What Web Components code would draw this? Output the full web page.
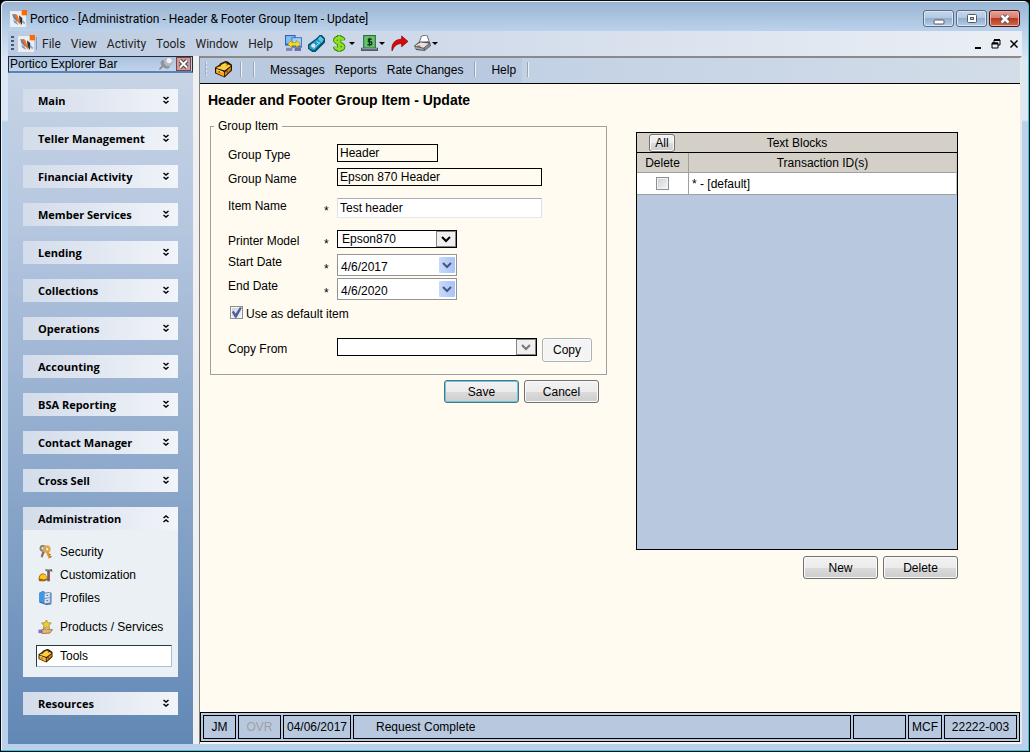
<!DOCTYPE html>
<html lang="en">
<head>
<meta charset="utf-8">
<title>Portico - [Administration - Header &amp; Footer Group Item - Update]</title>
<style>
  html, body { margin: 0; height: 100%; }
  body { font: 12px/16px "Liberation Sans", Arial, sans-serif; color: #000; background: #000; }
</style>
</head>
<body>
<portico-app></portico-app>
<script>
const define = (name, html, setup) => {
  const tpl = document.createElement('template');
  tpl.innerHTML = '<style>*{box-sizing:border-box}</style>' + html;
  customElements.define(name, class extends HTMLElement {
    constructor() {
      super();
      this.attachShadow({ mode: 'open' }).append(tpl.content.cloneNode(true));
    }
    connectedCallback() { if (setup) setup(this, this.shadowRoot); }
  });
};

const ICONS = {
  logo: `<rect x="0" y="1" width="15" height="15" fill="#eceef2"/><path d="M2 4l4 0 1.500 4-1 3-3-3z" fill="#6c7f98"/><path d="M3 9l3 2 2 3-4-2z" fill="#6f9cc8"/><path d="M4 4l3 1 1.500 4 1.500 5-3-3-1.500-3z" fill="#f3701a"/><path d="M8.500 5l3 2.500v4.500l-.5 2-2-3.500z" fill="#2f333c"/><path d="M11.500 9l2.500 2.500v2l-2.500-1.500z" fill="#88a9cf"/><rect x="11" y="0" width="5" height="5" fill="#ff6a00"/>`,
  toolbox: `<path d="M0 6l4-2.500L5 2l5-2 2 .5 4 3V9l-7 6.500-9-4z" fill="#241400"/><path d="M1 6.500l4-2 5-2.500 5 2.500-6 4.500z" fill="#ffcf3c"/><path d="M1 7.500l7.500 3v4L1 11z" fill="#f8a81c"/><path d="M9.300 10.500L15 5.500v3L9.300 14z" fill="#d88410"/><path d="M4.500 5.500l1-2.500 5-2 1.500 1.500-1 2" fill="none" stroke="#5c3000" stroke-width=".8"/><path d="M1.500 8l6.500 2.500M6 4l4-1.800" stroke="#fff09c" stroke-width=".8"/><path d="M4 9.500v1.500M11.500 9.500v1.500" stroke="#3a2000" stroke-width=".8"/>`,
  monitors: `<rect x="0" y="0" width="10" height="10" fill="#2f62b8"/><rect x="1" y="1" width="8" height="7" fill="#7fbcf8"/><rect x="6" y="2" width="10" height="10" fill="#4a78c4"/><rect x="7" y="3" width="8" height="7" fill="#9cd0ff"/><path d="M2.500 8.500L6.500 5v2.200h4V5l4 3.500-4 3.500V9.800h-4V12z" fill="#ffdc14" stroke="#a07c00" stroke-width=".5"/><rect x="1" y="12" width="6" height="3" fill="#8286bc"/><rect x="9" y="12" width="6" height="3" fill="#6a6fa8"/>`,
  tag: `<path d="M0 9L8 3l3-3h2l3 3v4l-9 9H4l-4-3z" fill="#064e6c"/><path d="M1 10l7.500-6 4.500 3-7 7.500-4.500-1.500z" fill="#1f9fc6"/><path d="M9 4l2.500-3 3.500 3-2 3.500z" fill="#52c8e4"/><circle cx="5" cy="10" r="2" fill="#efdcf0"/><path d="M8 6l3 2M5 13l6-6" stroke="#a4ecff" stroke-width=".8"/>`,
  dollar: `<path d="M11.500 5c0-3-7.500-3-7.500 0s7.500 3 7.500 6-7.500 3-7.500 0M7.700 0v16" fill="none" stroke="#2c6e14" stroke-width="4"/><path d="M11.500 5c0-3-7.500-3-7.500 0s7.500 3 7.500 6-7.500 3-7.500 0M7.700 .5v15" fill="none" stroke="#8ee022" stroke-width="2.600"/>`,
  cash: `<rect x="2" y="0" width="12" height="13" fill="#1e7038"/><rect x="3" y="1" width="10" height="11" fill="#68bf6c"/><path d="M10 4H7v2.500h3V9H6M8 2.500v8" fill="none" stroke="#0d3d18" stroke-width="1.200"/><path d="M0 12h16v3H0z" fill="#4c5058"/><path d="M1 13h14" stroke="#a8adb4"/>`,
  redo: `<path d="M1 15C0 8 4 4 10 4V1l6 5-6 5V8C6 8 3 10 1 15z" fill="#d80808" stroke="#8a0000" stroke-width=".7"/>`,
  printer: `<path d="M5 7l2-6 5-1 2 5-3 3z" fill="#fff" stroke="#555" stroke-width=".8"/><path d="M0 10l5-4 10 0 1 4-6 5-8-1z" fill="#55575c"/><path d="M1 10l5-3 8 1-5 4z" fill="#e4e4e4"/><path d="M1 11l8 2v1l-7-1z" fill="#aaa"/><path d="M10 12l5-4v2l-5 4z" fill="#8d8d90"/><rect x="3" y="10" width="3" height="1" fill="#c0332b"/>`,
  keys: `<path d="M4.500 7L2.500 13l2 1.500L7.500 7z" fill="#77716a"/><circle cx="5" cy="3.800" r="2.700" fill="none" stroke="#8b8379" stroke-width="2.400"/><circle cx="9.500" cy="4.600" r="3" fill="none" stroke="#e0a848" stroke-width="2.800"/><path d="M8.500 8l3 7.500 3-1-3-7z" fill="#e0962e"/><path d="M12 11.500l2-.8M13 14l2-.8" stroke="#885010"/>`,
  custom: `<path d="M0 13c0-6 5-8 8-6l3 6-4 2H1z" fill="#a06000"/><path d="M1 12c0-5 5-6 7-4l2 4-4 1z" fill="#ffc422"/><path d="M8 1h7l1 3h-2l-1-1v12h-3V4L8 3z" fill="#5b5e66"/><path d="M11 6h1v8h-1z" fill="#d0402a"/><path d="M9 2h5" stroke="#c9ccd2"/>`,
  profile: `<path d="M1 2l4-2 2 1v12l7 1 1 1-6 1-8-3z" fill="#1d5fae"/><path d="M1 2l4-2 2 1v13l-6-2z" fill="#3f97e6"/><path d="M6 2l6-1 3 1v12l-7 1-2-1z" fill="#6c8db8"/><path d="M7 3l6-1v5l-6 1zM7 9l6-1v5l-6 1z" fill="#d4e4f6"/><path d="M9 5h2M9 11h2" stroke="#3f5f8c"/>`,
  product: `<path d="M9 0l1.600 3 4 .6-2.800 2.600.8 3.800L9 8 5.500 10l.8-3.800L3.500 3.600l4-.6z" fill="#f0cd32" stroke="#9a7a10" stroke-width=".8"/><path d="M0 11h4v4H0z" fill="#8866d0"/><path d="M4 11l5-1 2 1h5l-3 4-9 .5z" fill="#e6b474" stroke="#8d5a25" stroke-width=".8"/>`,
  pin: `<path d="M0 14l5-5" stroke="#777" stroke-width="1.500"/><ellipse cx="6.500" cy="8.500" rx="6" ry="4" transform="rotate(40 6.500 8.500)" fill="#8f949c"/><circle cx="10" cy="5.500" r="5" fill="#b4b8be"/><circle cx="11" cy="4" r="3" fill="#f1f2f4"/>`
};

define('app-icon', `<style>:host{display:block;flex:none;width:17px;height:17px}svg{display:block;width:100%;height:100%}</style><svg viewBox="0 0 16 16" aria-hidden="true"></svg>`,
  (el, root) => { root.querySelector('svg').innerHTML = ICONS[el.getAttribute('name')]; });

define('win-button', `<style>
  :host{display:block;width:75px;height:23px}
  button{display:block;width:100%;height:100%;padding:0;font:inherit;color:#000;border:1px solid #707070;border-radius:3px;
    background:linear-gradient(#f3f3f3,#ebebeb 50%,#dcdcdc 50%,#cdcdcd);box-shadow:inset 0 0 0 1px #fafafa}
  :host([primary]) button{border-color:#56707c;box-shadow:inset 0 0 0 1px #5fcbe6}
  :host([flat]) button{border-color:#adb2b5;background:#f4f4f4}
</style><button type="button"><slot></slot></button>`);

define('title-bar', `<style>
  :host{display:flex;align-items:center;height:29px;padding:4px 2px 0 2px;gap:3px;font:12px/16px Roboto,"Open Sans",sans-serif}
  h1{font:inherit;margin:0;flex:1;white-space:nowrap}
  .controls{display:flex;gap:2px;align-self:flex-start;padding-top:4px}
  button{width:31px;height:17px;padding:0;border:1px solid #5b6b86;border-radius:3px;display:grid;place-items:center;
    background:linear-gradient(#c4d5e9,#b2c8e1 50%,#93afcf 50%,#b5cee7);box-shadow:inset 0 0 0 1px #d8e5f3}
  .close{border-color:#43141a;background:linear-gradient(#e3a396,#d57f70 45%,#b83a20 50%,#cf6a4d);box-shadow:inset 0 0 0 1px #e9b1a4}
  svg{display:block;width:14px;height:12px}
</style>
<app-icon name="logo"></app-icon><h1>Portico - [Administration - Header &amp; Footer Group Item - Update]</h1>
<div class="controls">
<button aria-label="Minimize"><svg viewBox="0 0 14 12"><rect x="2" y="7" width="10" height="4" rx="1" fill="#fff" stroke="#555c69"/></svg></button>
<button aria-label="Maximize"><svg viewBox="0 0 14 12"><rect x="2.500" y="1.500" width="9" height="8" rx="1" fill="#fff" stroke="#555c69"/><rect x="5.500" y="4.500" width="3" height="2" fill="#b8cbe2" stroke="#555c69"/></svg></button>
<button class="close" aria-label="Close"><svg viewBox="0 0 14 12"><path d="M3.500 2.500l7 7M10.500 2.500l-7 7" stroke="#565060" stroke-width="4.500"/><path d="M3.500 2.500l7 7M10.500 2.500l-7 7" stroke="#fff" stroke-width="2.500"/></svg></button>
</div>`);

define('menu-bar', `<style>
  :host{display:flex;align-items:center;height:25px;padding:0 3px;background:linear-gradient(90deg,#bccbe1,#ebeff5);font:12px/16px Roboto,"Open Sans",sans-serif}
  .grip{width:3px;height:15px;background:repeating-linear-gradient(#3e5a84 0 2px,transparent 2px 4px);margin-right:4px}
  .rule{width:1px;height:13px;background:#7f9cc6;margin-left:1px}
  nav{display:flex;gap:10px;margin:0 12px 0 5px}
  a{color:#222;text-decoration:none}
  .tools{display:flex;align-items:center;gap:6px;flex:1}
  button{padding:0;border:0;background:none;display:flex;align-items:center;gap:1px}
  i{border:3px solid transparent;border-top-color:#000;border-bottom:0}
  .mdi{display:flex;gap:8px} .mdi svg{width:10px;height:12px;display:block}
</style>
<span class="grip"></span><app-icon name="logo"></app-icon><span class="rule"></span>
<nav><a href="#">File</a><a href="#">View</a><a href="#">Activity</a><a href="#">Tools</a><a href="#">Window</a><a href="#">Help</a></nav>
<div class="tools">
<button aria-label="Workstations"><app-icon name="monitors"></app-icon></button>
<button aria-label="Tags"><app-icon name="tag"></app-icon></button>
<button aria-label="Funds"><app-icon name="dollar"></app-icon><i></i></button>
<button aria-label="Cash"><app-icon name="cash"></app-icon><i></i></button>
<button aria-label="Forward"><app-icon name="redo"></app-icon></button>
<button aria-label="Print"><app-icon name="printer"></app-icon><i></i></button>
</div>
<div class="mdi">
<button aria-label="Minimize document"><svg viewBox="0 0 10 12"><path d="M2 10h6" stroke="#000" stroke-width="2"/></svg></button>
<button aria-label="Restore document"><svg viewBox="0 0 10 12"><path d="M3 5V2h6v5H7M1 5h6v5H1z" fill="none" stroke="#000"/><path d="M3 2h6M1 5.500h6" stroke="#000" stroke-width="2"/></svg></button>
<button aria-label="Close document"><svg viewBox="0 0 10 12"><path d="M1.500 2.500l7 7M8.500 2.500l-7 7" stroke="#000" stroke-width="1.500"/></svg></button>
</div>`);

define('nav-group', `<style>
  :host{display:block}
  button{display:flex;align-items:center;justify-content:space-between;width:100%;height:23px;padding:0 8px 0 15px;border:0;
    background:linear-gradient(90deg,#d3dcea,#f1f4f9);font:bold 11px/16px "Open Sans",sans-serif;color:#000;text-align:left}
  svg{display:block;width:8px;height:9px}
  :host([open]) svg{transform:scaleY(-1)}
  .items{display:none}
  :host([open]) .items{display:flex;flex-direction:column;gap:1px;padding:11px 6px 10px 13px;background:#eaf0f4}
</style>
<button type="button"><span></span><svg viewBox="0 0 8 9"><path d="M1.500 1L4 3l2.500-2M1.500 5L4 7l2.500-2" fill="none" stroke="#000" stroke-width="1.500"/></svg></button>
<div class="items"><slot></slot></div>`,
  (el, root) => {
    root.querySelector('span').textContent = el.getAttribute('label');
    root.querySelector('button').setAttribute('aria-expanded', el.hasAttribute('open'));
  });

define('nav-item', `<style>
  :host{display:block}
  :host([apart]){margin-top:6px}
  a{display:flex;align-items:center;gap:5px;height:22px;padding-left:1px;color:#000;text-decoration:none;border:1px solid transparent;white-space:nowrap}
  ::slotted(app-icon){margin-right:2px}
  :host([selected]) a{background:#fff;border-color:#243b44 #a9c0dc #a9c0dc #243b44}
</style><a href="#"><slot name="icon"></slot><slot></slot></a>`);

define('explorer-bar', `<style>
  :host{display:flex;flex-direction:column;flex:none;width:185px;background:linear-gradient(#c8d5e6,#b5c6df 25%,#6188b5)}
  header{display:flex;align-items:center;height:17px;padding:0 1px;border:1px solid #222e40;border-bottom:2px solid #5a83b5;background:linear-gradient(#a9c1df,#c3d4ea)}
  h2{flex:1;margin:0;font:inherit}
  header button{flex:none;padding:0;border:0;background:none;display:block}
  .x{width:15px;height:14px;margin-left:2px;background:#7d4048}
  .x svg{display:block;width:15px;height:14px}
  app-icon{width:15px;height:14px}
  nav{display:flex;flex-direction:column;gap:15px;padding:16px 15px 29px}
</style>
<header><h2>Portico Explorer Bar</h2><button aria-label="Pin"><app-icon name="pin"></app-icon></button><button class="x" aria-label="Close"><svg viewBox="0 0 15 14"><rect x="1" y="1" width="13" height="12" fill="#cf9a98"/><path d="M4 3.500l7 7M11 3.500l-7 7" stroke="#444" stroke-width="4"/><path d="M4 3.500l7 7M11 3.500l-7 7" stroke="#fff" stroke-width="2"/></svg></button></header>
<nav>
<nav-group label="Main"></nav-group><nav-group label="Teller Management"></nav-group><nav-group label="Financial Activity"></nav-group>
<nav-group label="Member Services"></nav-group><nav-group label="Lending"></nav-group><nav-group label="Collections"></nav-group>
<nav-group label="Operations"></nav-group><nav-group label="Accounting"></nav-group><nav-group label="BSA Reporting"></nav-group>
<nav-group label="Contact Manager"></nav-group><nav-group label="Cross Sell"></nav-group>
<nav-group label="Administration" open>
<nav-item><app-icon slot="icon" name="keys"></app-icon>Security</nav-item>
<nav-item><app-icon slot="icon" name="custom"></app-icon>Customization</nav-item>
<nav-item><app-icon slot="icon" name="profile"></app-icon>Profiles</nav-item>
<nav-item apart><app-icon slot="icon" name="product"></app-icon>Products / Services</nav-item>
<nav-item apart selected><app-icon slot="icon" name="toolbox"></app-icon>Tools</nav-item>
</nav-group>
<nav-group label="Resources"></nav-group>
</nav>`);

define('tool-strip', `<style>
  :host{display:flex;align-items:center;height:26px;padding:0 0 2px 5px;border-bottom:1px solid #000;background:linear-gradient(90deg,#b9c9df 0 322px,#c3d1e5 322px,#d2dde8)}
  .grip{width:2px;height:15px;margin-right:8px;background:repeating-linear-gradient(#e6ecf4 0 2px,transparent 2px 4px);border-left:1px solid #9fb0c8}
  .sep{width:2px;height:15px;border-left:1px solid #9aa4b2;border-right:1px solid #eef2f7}
  button{padding:0;border:0;background:none;margin-right:8px}
  nav{display:flex;gap:10px;margin:0 11px 0 15px}
  a{color:#000;text-decoration:none}
  .first{margin-right:11px}
</style>
<span class="grip"></span><button aria-label="Tools"><app-icon name="toolbox"></app-icon></button><span class="sep first"></span><span class="sep"></span>
<nav><a href="#">Messages</a><a href="#">Reports</a><a href="#">Rate Changes</a></nav><span class="sep"></span>
<nav><a href="#">Help</a></nav><span class="sep"></span>`);

define('form-row', `<style>
  :host{display:grid;grid-template-columns:92px 17px 1fr}
  .label{padding-top:3px;height:16px}
  :host([tall]) .label{padding:0}
  .mark{padding-left:4px;align-self:end;line-height:8px}
  :host([tall]) .mark{padding-bottom:3px}
  .field{display:flex;gap:5px}
</style><span class="label"><slot name="label"></slot></span><span class="mark"><slot name="mark"></slot></span><span class="field"><slot></slot></span>`);

define('combo-box', `<style>
  :host{display:grid;grid-template-columns:1fr 20px;width:120px;height:18px;border:1px solid #000;background:#fff}
  ::slotted(select),::slotted(input){grid-area:1/1/2/3;width:100%;appearance:none;border:0;background:none;padding:0 20px 0 4px;margin:0;font:inherit;color:#000;outline:0;border-radius:0;min-width:0;box-sizing:border-box}
  .arrow{grid-area:1/2;display:grid;place-items:center;border:1px solid #848484;background:#f0f0f0;pointer-events:none;color:#000}
  svg{width:10px;height:7px;display:block}
  :host([muted]) .arrow{color:#777}
  :host([date]){height:22px;border-color:#949494}
  :host([date]) .arrow{border:0;margin:2px 1px 2px 3px;border-radius:1px;background:linear-gradient(90deg,#c9d9fb,#a9c3f6);color:#46577c}
  ::slotted(input){padding:4px 20px 0 3px}
</style><slot></slot><span class="arrow"><svg viewBox="0 0 10 7"><path d="M1 1l4 4 4-4" fill="none" stroke="currentColor" stroke-width="2"/></svg></span>`);

const CHECKBOX = `
  input[type=checkbox]{appearance:none;flex:none;width:13px;height:13px;margin:0;border:1px solid #8e8f8f;background:linear-gradient(135deg,#cbcfd5,#f6f6f6);box-shadow:inset 0 0 0 1px #f4f4f4;display:block}
  input[type=checkbox]:checked::before{content:"";display:block;width:11px;height:11px;background:#4b5fa0;clip-path:polygon(8% 45%,25% 35%,42% 62%,80% 2%,100% 6%,50% 98%,36% 98%)}`;

define('group-item-form', `<style>
  :host{display:block}
  form{margin:0}
  fieldset{margin:0;padding:0;border:1px solid #a0a0a0;min-width:0}
  legend{margin-left:3px;padding:0 4px;line-height:14px}
  .rows{display:flex;flex-direction:column;padding:11px 14px 12px 17px;gap:6px}
  .spaced{margin-top:6px}
  input.text{width:205px;height:18px;padding:0 2px;border:1px solid #000;background:#fffbf0;font:inherit;color:#000;border-radius:0}
  input.short{width:101px}
  input.edit{height:20px;background:#fff;border-color:#abadb3 #dbdfe6 #e3e9ef #e2e3ea}
  .dates{display:flex;flex-direction:column;gap:2px}
  .check{display:flex;align-items:flex-start;gap:3px;height:16px;padding-left:2px}
  .copy{margin-top:10px}
  .wide{width:200px} .copy win-button{width:50px;height:24px}
  .actions{display:flex;justify-content:flex-end;gap:5px;padding:5px 8px 0}
  ${CHECKBOX}
</style>
<form>
<fieldset><legend>Group Item</legend><div class="rows">
<form-row><label slot="label" for="type">Group Type</label><input id="type" class="text short" value="Header" readonly></form-row>
<form-row><label slot="label" for="name">Group Name</label><input id="name" class="text" value="Epson 870 Header" readonly></form-row>
<form-row tall class="spaced"><label slot="label" for="item">Item Name</label><span slot="mark">*</span><input id="item" class="text edit" value="Test header"></form-row>
<form-row class="spaced"><label slot="label" for="model">Printer Model</label><span slot="mark">*</span><combo-box><select id="model"><option>Epson870</option></select></combo-box></form-row>
<div class="dates">
<form-row tall><label slot="label" for="start">Start Date</label><span slot="mark">*</span><combo-box date><input id="start" value="4/6/2017"></combo-box></form-row>
<form-row tall><label slot="label" for="end">End Date</label><span slot="mark">*</span><combo-box date><input id="end" value="4/6/2020"></combo-box></form-row>
</div>
<div class="check"><input id="default" type="checkbox" checked><label for="default">Use as default item</label></div>
<form-row class="copy"><label slot="label" for="from">Copy From</label><combo-box class="wide" muted><select id="from"><option></option></select></combo-box><win-button flat>Copy</win-button></form-row>
</div></fieldset>
<div class="actions"><win-button primary>Save</win-button><win-button>Cancel</win-button></div>
</form>`);

define('text-blocks', `<style>
  :host{display:flex;flex-direction:column}
  .grid{flex:1;border:1px solid #000;background:#b8c9df}
  .top{display:grid;grid-template-columns:51px 1fr 51px;align-items:center;height:20px;background:#d4d0c8;border-bottom:1px solid #000;text-align:center}
  .top win-button{width:26px;height:18px;margin-left:12px}
  h3{margin:0;font:inherit}
  table{width:100%;border-collapse:separate;border-spacing:0;table-layout:fixed}
  th,td{padding:0 3px;font-weight:normal;height:20px;border-bottom:1px solid #a0a0a0;border-right:1px solid #a0a0a0}
  tr>:last-child{border-right-color:#c4c4c4}
  th{background:#d4d0c8} td{background:#fff;height:22px}
  th:first-child{width:52px}
  td input{margin:0 auto!important}
  .actions{display:flex;justify-content:flex-end;gap:5px;padding-top:6px}
  ${CHECKBOX}
</style>
<div class="grid"><div class="top"><win-button>All</win-button><h3>Text Blocks</h3></div>
<table><thead><tr><th scope="col">Delete</th><th scope="col">Transaction ID(s)</th></tr></thead>
<tbody><tr><td><input type="checkbox" aria-label="Delete default transaction"></td><td>* - [default]</td></tr></tbody></table></div>
<div class="actions"><win-button>New</win-button><win-button>Delete</win-button></div>`);

define('status-bar', `<style>
  :host{display:grid;grid-template-columns:33px 43px 68px 1fr 53px 34px 73px;gap:2px;height:30px;padding:2px;border:1px solid #000;background:#b8c9df}
  span{display:flex;align-items:center;justify-content:center;border:1px solid #000;white-space:nowrap}
  .off{color:#a0a0a0}
  .message{justify-content:flex-start;padding-left:22px}
</style><span>JM</span><span class="off">OVR</span><span>04/06/2017</span><span class="message" role="status">Request Complete</span><span></span><span>MCF</span><span>22222-003</span>`);

define('portico-app', `<style>
  :host{display:flex;flex-direction:column;min-height:100vh;box-sizing:border-box;padding:1px 7px 7px;border:1px solid #0a0d10;border-radius:6px 6px 0 0;
    background:linear-gradient(#9ab3d1,#b9d1ea 29px,#dbe8f5 60px,#dbe8f5 119px,#b9d1ea 121px);box-shadow:inset -1px -1px #35c9e6,inset 1px 1px #e6f0fa}
  .body{flex:1;display:flex}
  .splitter{flex:none;width:7px;background:#f0f0f0;border-right:1px solid #808080}
  .work{flex:1;min-width:0;display:flex;flex-direction:column;background:#fffbf0;border-top:2px solid #8a8a8a;border-right:2px solid #e8e8e8;border-bottom:2px solid #f4f4f4}
  main{flex:1;display:flex;flex-direction:column;padding:8px 62px 133px 8px}
  h2{margin:0 0 11px;font:bold 14px/16px "Liberation Sans",Arial,sans-serif}
  .columns{flex:1;display:flex;gap:29px;padding-left:2px}
  group-item-form{flex:0 0 397px}
  text-blocks{flex:1;padding-top:13px}
</style>
<title-bar></title-bar><menu-bar></menu-bar>
<div class="body"><explorer-bar></explorer-bar><div class="splitter"></div>
<div class="work"><tool-strip></tool-strip>
<main><h2>Header and Footer Group Item - Update</h2><div class="columns"><group-item-form></group-item-form><text-blocks></text-blocks></div></main>
<status-bar></status-bar></div></div>`);
</script>
</body>
</html>
